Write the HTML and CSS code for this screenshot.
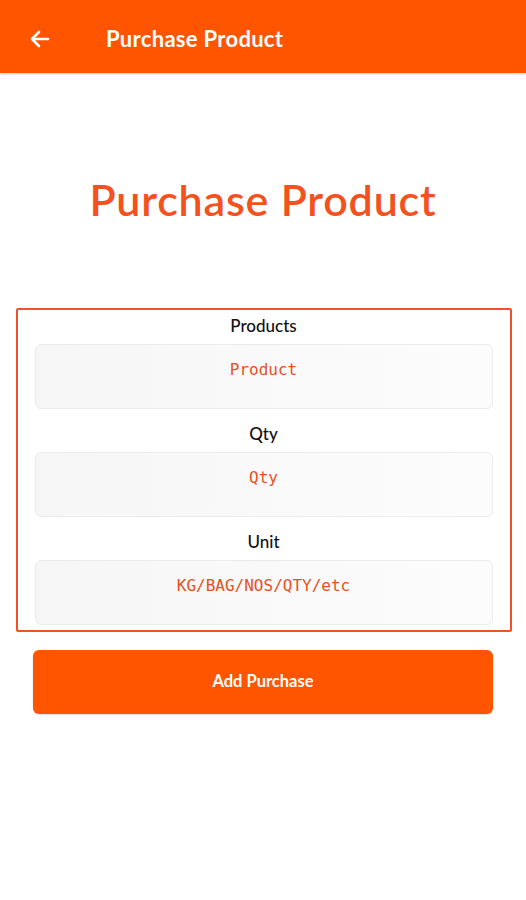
FILE: index.html
```html
<!DOCTYPE html>
<html>
<head>
<meta charset="utf-8">
<link rel="stylesheet" href="styles.css">
</head>
<body>
<header class="appbar">
  <svg class="back" width="24" height="24" viewBox="0 0 24 24"><path d="M20 12H5M11 5l-7 7 7 7" fill="none" stroke="#fff" stroke-width="2.6" stroke-linecap="round" stroke-linejoin="round"/></svg>
  <span class="appbar-title">Purchase Product</span>
</header>
<main class="content">
  <h1 class="heading">Purchase Product</h1>
  <section class="card">
    <div class="field">
      <label class="label">Products</label>
      <div class="input">Product</div>
    </div>
    <div class="field">
      <label class="label">Qty</label>
      <div class="input">Qty</div>
    </div>
    <div class="field">
      <label class="label">Unit</label>
      <div class="input">KG/BAG/NOS/QTY/etc</div>
    </div>
  </section>
  <button class="btn">Add Purchase</button>
</main>
</body>
</html>
```
FILE: styles.css
```css
* { box-sizing: border-box; }
html, body { margin: 0; padding: 0; background: #fff; }
body { width: 526px; height: 900px; font-family: "Lato", "Open Sans", sans-serif; }
.appbar {
  height: 73px;
  background: #ff5500;
  display: flex;
  align-items: center;
  padding: 4px 0 0 28px;
  box-shadow: 0 1px 2px rgba(0,0,0,0.2);
}
.back { display: block; }
.appbar-title {
  color: #fff;
  font-weight: 700;
  font-size: 22px;
  margin-left: 54px;
  letter-spacing: 0.3px;
}
.content { display: flex; flex-direction: column; align-items: center; }
.heading {
  margin: 100px 0 0;
  color: #f4511e;
  font-size: 43px;
  font-weight: 600;
  line-height: 54px;
  letter-spacing: 0.8px;
}
.card {
  margin-top: 81px;
  width: 496px;
  border: 2px solid #f0502a;
  border-radius: 2px;
  padding: 5px 17px 5px;
  display: flex;
  flex-direction: column;
  gap: 14px;
  margin-left: 1px;
}
.field { display: flex; flex-direction: column; align-items: stretch; }
.label {
  text-align: center;
  font-size: 17px;
  font-weight: 500;
  color: #111;
  line-height: 22px;
  margin-bottom: 7px;
}
.input {
  height: 65px;
  background: linear-gradient(90deg, #f6f6f6, #fcfcfc);
  border: 1px solid #ececec;
  border-radius: 6px;
  text-align: center;
  font-family: "DejaVu Sans Mono", monospace;
  font-size: 16px;
  color: #e8501f;
  padding-top: 15px;
}
.btn {
  margin-top: 18px;
  width: 460px;
  height: 64px;
  background: #ff5500;
  border: none;
  border-radius: 6px;
  color: #fff;
  font-family: "Lato", sans-serif;
  font-weight: 700;
  font-size: 16.5px;
  padding-bottom: 4px;
  box-shadow: 0 1px 2px rgba(0,0,0,0.15);
}
```
